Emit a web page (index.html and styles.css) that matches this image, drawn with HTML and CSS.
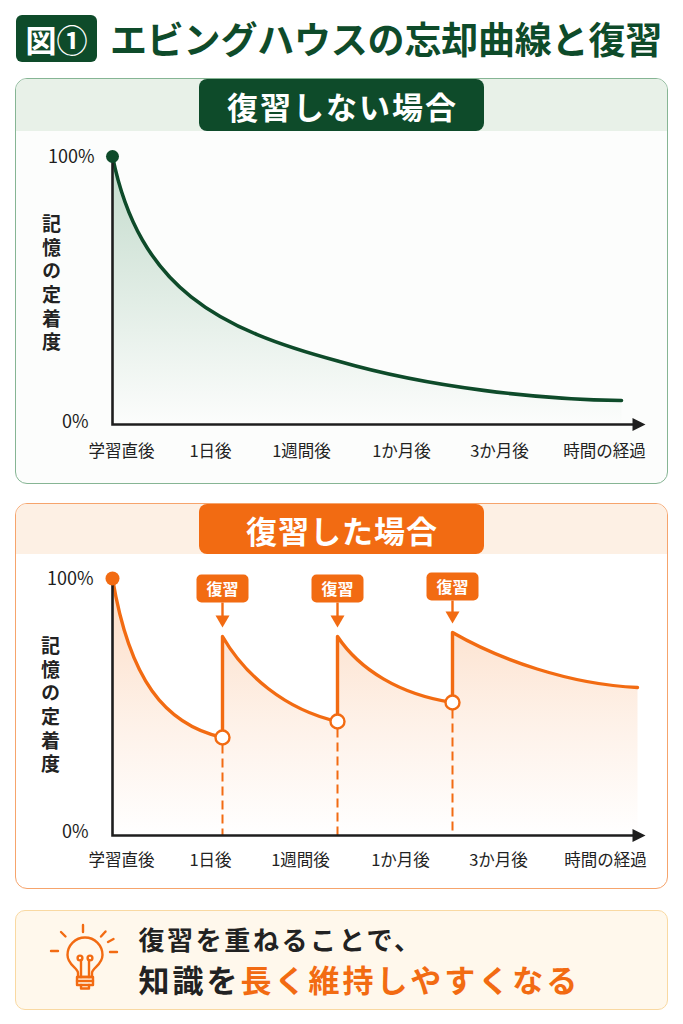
FILE: index.html
```html
<!DOCTYPE html>
<html lang="ja">
<head>
<meta charset="utf-8">
<title>エビングハウスの忘却曲線と復習</title>
<link rel="stylesheet" href="styles.css">
</head>
<body>
<div class="page">
  <header class="title-row">
    <div class="fig-badge">図①</div>
    <h1 class="title">エビングハウスの忘却曲線と復習</h1>
  </header>

  <section class="panel panel-green">
    <div class="panel-head"><div class="pill">復習しない場合</div></div>
    <svg class="chart chart-top" viewBox="16.5 131.5 650 351" width="650" height="351">
      <defs>
        <linearGradient id="gfill" x1="0" y1="157" x2="0" y2="425" gradientUnits="userSpaceOnUse">
          <stop offset="0" stop-color="#3d8a5a" stop-opacity="0.3"/>
          <stop offset="0.6" stop-color="#3d8a5a" stop-opacity="0.12"/>
          <stop offset="1" stop-color="#3d8a5a" stop-opacity="0.0"/>
        </linearGradient>
      </defs>
      <path d="M113,157 C140,290 220,330 340,362 C430,388 540,400 622,401 L622,425 L113,425 Z" fill="url(#gfill)"/>
      <path d="M113,157 C140,290 220,330 340,362 C430,388 540,400 622,401" class="curve-green"/>
      <path d="M113,157 V425 H636" class="axis"/>
      <polygon points="633,418.5 646,425 633,431.5" class="axis-head"/>
      <circle cx="113" cy="157" r="6.5" class="dot-green"/>
      <text x="95" y="163.5" class="pct" text-anchor="end">100%</text>
      <text x="89" y="428.5" class="pct" text-anchor="end">0%</text>
      <text x="52" y="215" class="vlabel">記憶の定着度</text>
      <g class="xlabel" text-anchor="middle">
        <text x="122" y="457">学習直後</text>
        <text x="211" y="457">1日後</text>
        <text x="302" y="457">1週間後</text>
        <text x="402" y="457">1か月後</text>
        <text x="500" y="457">3か月後</text>
        <text x="605" y="457">時間の経過</text>
      </g>
    </svg>
  </section>

  <section class="panel panel-orange">
    <div class="panel-head"><div class="pill">復習した場合</div></div>
    <svg class="chart chart-bottom" viewBox="16.5 554.5 650 333" width="650" height="333">
      <defs>
        <linearGradient id="ofill" x1="0" y1="579" x2="0" y2="836" gradientUnits="userSpaceOnUse">
          <stop offset="0" stop-color="#f58a3c" stop-opacity="0.3"/>
          <stop offset="0.55" stop-color="#f58a3c" stop-opacity="0.12"/>
          <stop offset="1" stop-color="#f58a3c" stop-opacity="0.0"/>
        </linearGradient>
      </defs>
      <path d="M113,579 C130,680 165,725 223,738 L223,637 C245,675 285,710 338,722 L338,637 C360,670 400,695 453,703 L453,633 C500,660 570,685 638,688 L638,836 L113,836 Z" fill="url(#ofill)"/>
      <path d="M223,745 V836 M338,729 V836 M453,710 V836" class="dash"/>
      <path d="M113,579 C130,680 165,725 223,738 L223,637 C245,675 285,710 338,722 L338,637 C360,670 400,695 453,703 L453,633 C500,660 570,685 638,688" class="curve-orange"/>
      <path d="M113,579 V836 H636" class="axis"/>
      <polygon points="633,829.5 646,836 633,842.5" class="axis-head"/>
      <circle cx="113" cy="579" r="7" class="dot-orange"/>
      <circle cx="223" cy="738" r="7" class="ring"/>
      <circle cx="338" cy="722" r="7" class="ring"/>
      <circle cx="453" cy="703" r="7" class="ring"/>

      <g class="badge">
        <rect x="197" y="575" width="52" height="28" rx="5"/>
        <text x="223" y="595" text-anchor="middle">復習</text>
        <path d="M223,603 V618"/>
        <polygon points="216,616 230,616 223,628"/>
      </g>
      <g class="badge">
        <rect x="312" y="575" width="52" height="28" rx="5"/>
        <text x="338" y="595" text-anchor="middle">復習</text>
        <path d="M338,603 V618"/>
        <polygon points="331,616 345,616 338,628"/>
      </g>
      <g class="badge">
        <rect x="427" y="573" width="52" height="28" rx="5"/>
        <text x="453" y="593" text-anchor="middle">復習</text>
        <path d="M453,601 V614"/>
        <polygon points="446,612 460,612 453,624"/>
      </g>

      <text x="94" y="585.5" class="pct" text-anchor="end">100%</text>
      <text x="89" y="838.5" class="pct" text-anchor="end">0%</text>
      <text x="51" y="637" class="vlabel">記憶の定着度</text>
      <g class="xlabel" text-anchor="middle">
        <text x="122" y="866">学習直後</text>
        <text x="211" y="866">1日後</text>
        <text x="301" y="866">1週間後</text>
        <text x="401" y="866">1か月後</text>
        <text x="499" y="866">3か月後</text>
        <text x="606" y="866">時間の経過</text>
      </g>
    </svg>
  </section>

  <section class="tip">
    <svg class="bulb" viewBox="0 0 90 90" width="90" height="90">
      <g fill="none" stroke="#f26b12" stroke-width="2.4" stroke-linecap="round" stroke-linejoin="round">
        <path d="M43,10 V17"/>
        <path d="M21,17 L25.5,21.5"/>
        <path d="M65.5,16.5 L61,21.5"/>
        <path d="M68,27 L73.5,24"/>
        <path d="M11,36 H18"/>
        <path d="M70,37 H77"/>
        <path d="M38,62 V58 C38,53 27.5,50 27.5,40 A17.5,17.5 0 1 1 62.5,40 C62.5,50 52,53 52,58 V62 Z"/>
        <path d="M37,62 H53 V70 H37 Z"/>
        <path d="M37,66 H53"/>
        <path d="M41,70 V73.5 H49 V70"/>
        <path d="M41,62 V45"/>
        <path d="M49,62 V45"/>
        <circle cx="40" cy="43" r="2.4"/>
        <circle cx="50" cy="43" r="2.4"/>
      </g>
    </svg>
    <div class="tip-text">
      <p class="tip-line1">復習を重ねることで、</p>
      <p class="tip-line2">知識を<span class="accent">長く維持しやすくなる</span></p>
    </div>
  </section>
</div>
</body>
</html>
```

FILE: styles.css
```css
* { box-sizing: border-box; }

html, body {
  margin: 0;
  padding: 0;
  background: #ffffff;
}

body {
  font-family: "Noto Sans CJK JP", "Noto Sans", sans-serif;
  color: #222;
  width: 683px;
}

.page {
  display: flex;
  flex-direction: column;
  padding: 15px 15px 0 15px;
}

.title-row {
  display: flex;
  align-items: center;
  gap: 13px;
  height: 47px;
  padding-left: 1px;
}

.fig-badge {
  width: 81px;
  height: 47px;
  background: #0e4b2a;
  color: #fff;
  border-radius: 6px;
  font-size: 31px;
  font-weight: 700;
  display: flex;
  align-items: center;
  justify-content: center;
  line-height: 1;
  letter-spacing: 0;
}

.title {
  margin: 0;
  font-size: 37px;
  font-weight: 700;
  color: #0e4b2a;
  line-height: 47px;
  letter-spacing: -0.2px;
  white-space: nowrap;
}

.panel {
  border-radius: 12px;
  overflow: hidden;
  border: 1.5px solid;
  display: flex;
  flex-direction: column;
}

.panel-green {
  margin-top: 16px;
  height: 406px;
  border-color: #86b594;
  background: #fcfdfc;
}

.panel-orange {
  margin-top: 19px;
  height: 386px;
  border-color: #f6a46c;
  background: #ffffff;
}

.panel-head {
  display: flex;
  justify-content: center;
  flex: none;
}

.panel-green .panel-head {
  height: 52px;
  background: #e8f1e8;
}

.panel-orange .panel-head {
  height: 50px;
  background: #fdf0e4;
}

.pill {
  width: 285px;
  height: 100%;
  border-radius: 8px;
  color: #fff;
  font-weight: 700;
  display: flex;
  align-items: center;
  justify-content: center;
  line-height: 1;
}

.panel-green .pill {
  background: #0e4b2a;
  font-size: 31px;
  letter-spacing: 2px;
  padding-left: 2px;
}

.panel-orange .pill {
  background: #f26b12;
  font-size: 31px;
  letter-spacing: 1px;
  padding-left: 1px;
}

.chart {
  display: block;
  flex: none;
}

.axis {
  fill: none;
  stroke: #1e1e1e;
  stroke-width: 2.6;
}

.axis-head {
  fill: #1e1e1e;
}

.curve-green {
  fill: none;
  stroke: #0e4b2a;
  stroke-width: 3.6;
  stroke-linecap: round;
}

.dot-green {
  fill: #0e4b2a;
}

.curve-orange {
  fill: none;
  stroke: #f26b12;
  stroke-width: 3.4;
  stroke-linejoin: round;
  stroke-linecap: round;
}

.dot-orange {
  fill: #f26b12;
}

.ring {
  fill: #fff;
  stroke: #f26b12;
  stroke-width: 2.4;
}

.dash {
  fill: none;
  stroke: #f26b12;
  stroke-width: 2;
  stroke-dasharray: 9 5;
}

.badge rect {
  fill: #f26b12;
}

.badge text {
  fill: #fff;
  font-size: 16px;
  font-weight: 700;
}

.badge path {
  stroke: #f26b12;
  stroke-width: 2.4;
  fill: none;
}

.badge polygon {
  fill: #f26b12;
}

.pct {
  font-size: 18px;
  fill: #1e1e1e;
}

.vlabel {
  writing-mode: vertical-rl;
  font-size: 19px;
  font-weight: 700;
  letter-spacing: 4.6px;
  fill: #222;
}

.xlabel text {
  font-size: 16.5px;
  fill: #222;
}

.tip {
  margin-top: 21px;
  height: 100px;
  border: 1.5px solid #f9d9a2;
  border-radius: 10px;
  background: #fff8ec;
  display: flex;
  align-items: center;
  padding-left: 23.5px;
  gap: 9px;
}

.bulb {
  display: block;
  flex: none;
}

.tip-text p {
  margin: 0;
  font-weight: 700;
  color: #222;
  white-space: nowrap;
}

.tip-line1 {
  font-size: 26px;
  line-height: 38px;
  letter-spacing: 2.6px;
}

.tip-line2 {
  font-size: 31px;
  line-height: 42px;
  letter-spacing: 3px;
}

.accent {
  color: #f26b12;
}
```
